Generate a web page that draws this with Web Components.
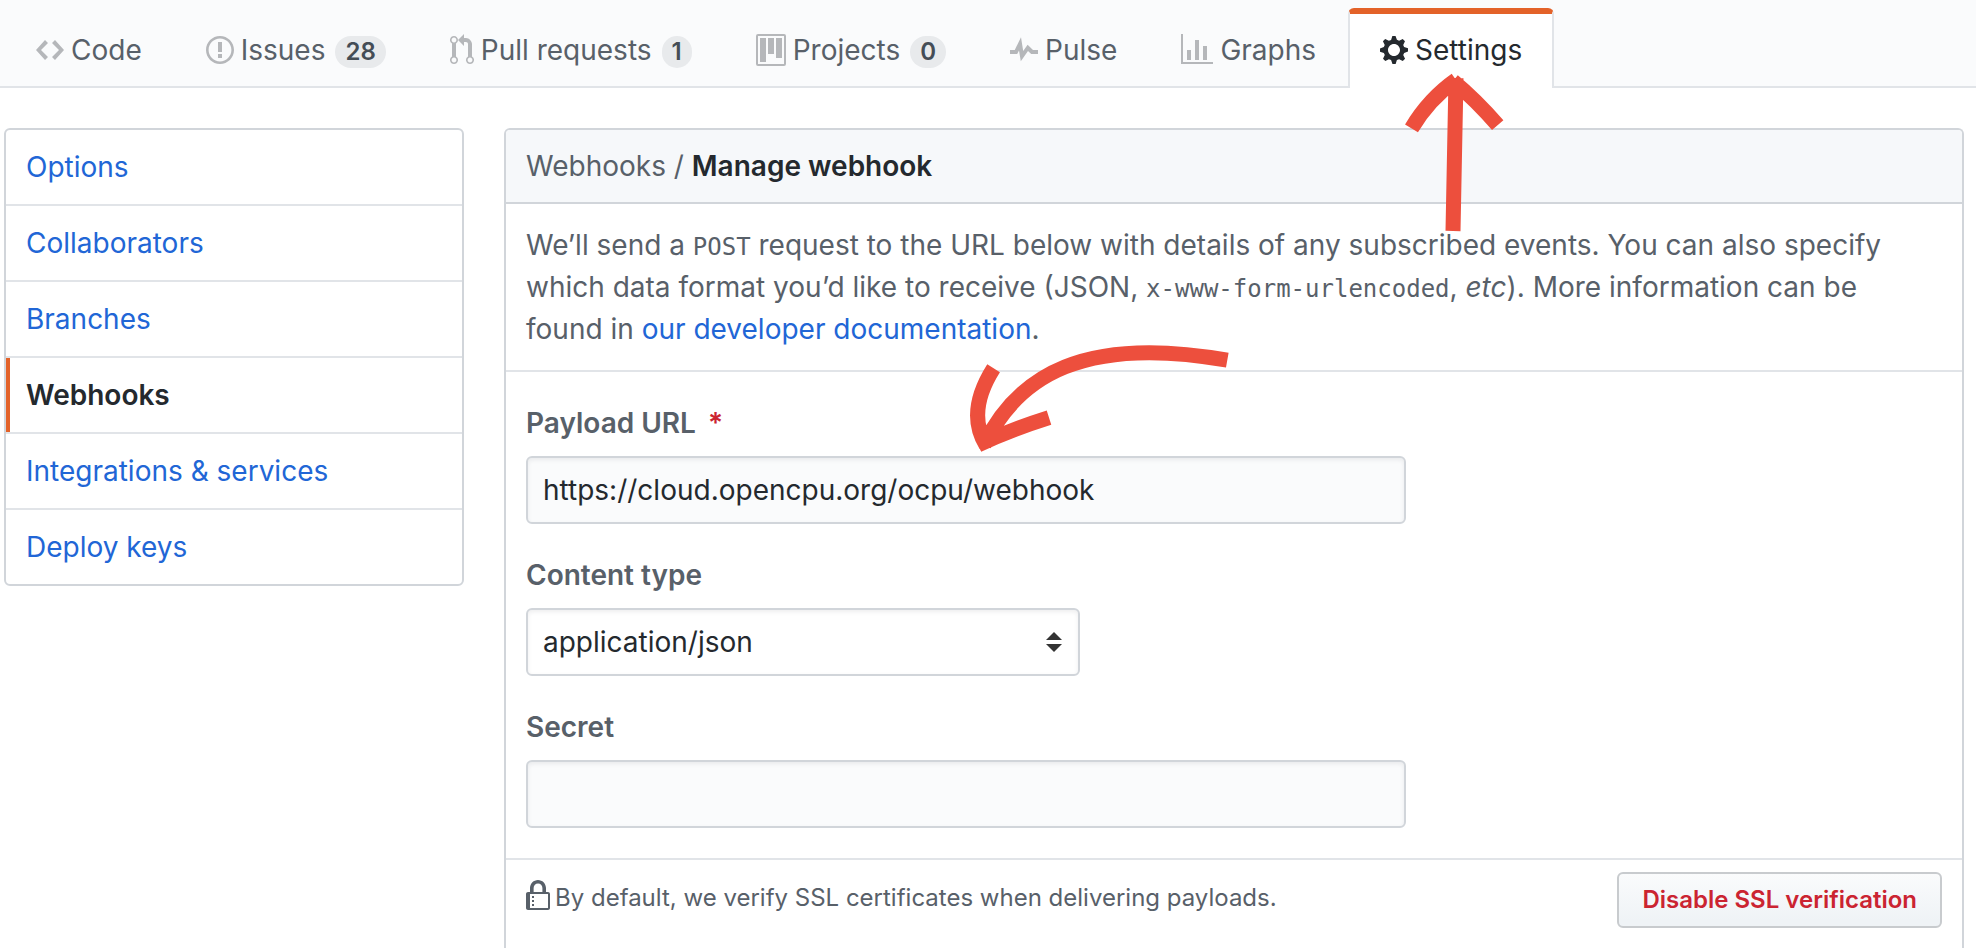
<!DOCTYPE html>
<html lang="en">
<head>
<meta charset="utf-8">
<title>Webhooks · Manage webhook</title>
<style>
  body {
    margin: 0;
    background: #fff;
    color: #586069;
    font: 28px/42px Inter, "Liberation Sans", sans-serif;
  }
</style>
</head>
<body>
<settings-page>
  <repo-nav slot="nav">
    <nav-tab icon="code">Code</nav-tab>
    <nav-tab icon="issue" count="28">Issues</nav-tab>
    <nav-tab icon="pull" count="1">Pull requests</nav-tab>
    <nav-tab icon="project" count="0">Projects</nav-tab>
    <nav-tab icon="pulse">Pulse</nav-tab>
    <nav-tab icon="graph">Graphs</nav-tab>
    <nav-tab icon="gear" selected>Settings</nav-tab>
  </repo-nav>

  <side-menu slot="menu">
    <side-item>Options</side-item>
    <side-item>Collaborators</side-item>
    <side-item>Branches</side-item>
    <side-item selected>Webhooks</side-item>
    <side-item>Integrations &amp; services</side-item>
    <side-item>Deploy keys</side-item>
  </side-menu>

  <webhook-panel slot="main">
    <text-field label="Payload URL" value="https://cloud.opencpu.org/ocpu/webhook" required></text-field>
    <select-field label="Content type" options="application/json,application/x-www-form-urlencoded"></select-field>
    <text-field label="Secret"></text-field>
    <ssl-row slot="footer">By default, we verify SSL certificates when delivering payloads.</ssl-row>
  </webhook-panel>

  <pointer-arrows slot="overlay"></pointer-arrows>
</settings-page>

<script>
const ICONS = {
  code: [14, 'M9.5 3L8 4.5 11.5 8 8 11.5 9.5 13 14 8 9.5 3zm-5 0L0 8l4.5 5L6 11.5 2.5 8 6 4.5 4.5 3z'],
  issue: [14, 'M7 2.3c3.14 0 5.7 2.56 5.7 5.7s-2.56 5.7-5.7 5.7A5.71 5.71 0 0 1 1.3 8c0-3.14 2.56-5.7 5.7-5.7zM7 1C3.14 1 0 4.14 0 8s3.14 7 7 7 7-3.14 7-7-3.14-7-7-7zm1 3H6v5h2V4zm0 6H6v2h2v-2z'],
  pull: [12, 'M11 11.28V5c-.03-.78-.34-1.47-.94-2.06C9.46 2.35 8.78 2.03 8 2H7V0L4 3l3 3V4h1c.27.02.48.11.69.31.21.2.3.42.31.69v6.28A1.993 1.993 0 0 0 10 15a1.993 1.993 0 0 0 1-3.72zm-1 2.92c-.66 0-1.2-.55-1.2-1.2 0-.65.55-1.2 1.2-1.2.65 0 1.2.55 1.2 1.2 0 .65-.55 1.2-1.2 1.2zM4 3c0-1.11-.89-2-2-2a1.993 1.993 0 0 0-1 3.72v6.56A1.993 1.993 0 0 0 2 15a1.993 1.993 0 0 0 1-3.72V4.72c.59-.34 1-.98 1-1.72zm-.8 10c0 .66-.55 1.2-1.2 1.2-.65 0-1.2-.55-1.2-1.2 0-.65.55-1.2 1.2-1.2.65 0 1.2.55 1.2 1.2zM2 4.2C1.34 4.2.8 3.65.8 3c0-.65.55-1.2 1.2-1.2.65 0 1.2.55 1.2 1.2 0 .65-.55 1.2-1.2 1.2z'],
  project: [15, 'M10 12h3V2h-3v10zm-4-2h3V2H6v8zm-4 4h3V2H2v12zm-1 1h13V1H1v14zM14 0H1a1 1 0 0 0-1 1v14a1 1 0 0 0 1 1h13a1 1 0 0 0 1-1V1a1 1 0 0 0-1-1z'],
  pulse: [14, 'M11.5 8L8.8 5.4 6.6 8.5 5.5 1.6 2.38 8H0v2h3.6l.9-1.8.9 5.4L9 8.5l1.6 1.5H14V8h-2.5z'],
  graph: [16, 'M16 14v1H0V0h1v14h15zM5 13H3V8h2v5zm4 0H7V3h2v10zm4 0h-2V6h2v7z'],
  gear: [14, 'M14 8.77v-1.6l-1.94-.64-.45-1.09.88-1.84-1.13-1.13-1.81.91-1.09-.45-.69-1.92h-1.6l-.63 1.94-1.11.45-1.84-.88-1.13 1.13.91 1.81-.45 1.09L0 7.23v1.59l1.94.64.45 1.09-.88 1.84 1.13 1.13 1.81-.91 1.09.45.69 1.92h1.59l.63-1.94 1.11-.45 1.84.88 1.13-1.13-.92-1.81.47-1.09L14 8.75v.02zM7 11c-1.66 0-3-1.34-3-3s1.34-3 3-3 3 1.34 3 3-1.34 3-3 3z'],
  lock: [12, 'M4 13H3v-1h1v1zm8-6v7c0 .55-.45 1-1 1H1c-.55 0-1-.45-1-1V7c0-.55.45-1 1-1h1V4c0-2.2 1.8-4 4-4s4 1.8 4 4v2h1c.55 0 1 .45 1 1zM3.8 6h4.41V4c0-1.22-.98-2.2-2.2-2.2-1.22 0-2.2.98-2.2 2.2v2H3.8zM11 7H2v7h9V7zM4 8H3v1h1V8zm0 2H3v1h1v-1z']
};

const icon = name => {
  const [w, d] = ICONS[name];
  return `<svg class="icon" width="${w * 2}" height="32" viewBox="0 0 ${w} 16" aria-hidden="true"><path fill="currentColor" fill-rule="evenodd" d="${d}"/></svg>`;
};

/* Registers an element whose open shadow root holds the given markup. */
const define = (tag, render) => customElements.define(tag, class extends HTMLElement {
  connectedCallback() {
    if (!this.shadowRoot) this.attachShadow({ mode: 'open' }).innerHTML = render(this);
  }
});

define('settings-page', () => `
  <style>
    :host { display: flex; flex-direction: column; min-height: 100vh; position: relative; }
    .columns {
      flex: 1;
      display: grid;
      grid-template-columns: 460px minmax(0, 1fr);
      gap: 40px;
      padding: 40px 12px 0 4px;
    }
  </style>
  <slot name="nav"></slot>
  <div class="columns"><slot name="menu"></slot><slot name="main"></slot></div>
  <slot name="overlay"></slot>`);

define('repo-nav', () => `
  <style>
    :host { display: block; background: #fafbfc; border-bottom: 2px solid #e1e4e8; }
    nav { display: flex; padding: 8px 4px 0; margin-bottom: -2px; }
  </style>
  <nav aria-label="Repository"><slot></slot></nav>`);

define('nav-tab', el => `
  <style>
    :host { display: block; flex: none; }
    a {
      display: flex;
      align-items: center;
      padding: 20px 30px 22px;
      border: 2px solid transparent;
      border-width: 6px 2px 0;
      border-radius: 6px 6px 0 0;
      color: #586069;
      line-height: 32px;
      text-decoration: none;
      white-space: nowrap;
    }
    :host([selected]) a {
      background: #fff;
      border-color: #e36229 #e1e4e8 transparent;
      color: #24292e;
    }
    .icon { flex: none; margin-right: 7px; color: #b5b7ba; }
    :host([selected]) .icon { color: inherit; }
    .count {
      margin: 2px 0 -2px 10px;
      padding: 0 10px;
      border-radius: 20px;
      background: #e8eaec;
      color: #444d56;
      font-size: 24px;
      font-weight: 600;
    }
  </style>
  <a href="#" ${el.hasAttribute('selected') ? 'aria-current="page"' : ''}>${icon(el.getAttribute('icon'))}<slot></slot>${
    el.hasAttribute('count') ? `<span class="count">${el.getAttribute('count')}</span>` : ''}</a>`);

define('side-menu', () => `
  <style>
    :host { display: block; align-self: start; border: 2px solid #d1d5da; border-radius: 6px; overflow: hidden; }
  </style>
  <nav aria-label="Settings"><slot></slot></nav>`);

define('side-item', el => `
  <style>
    :host { display: block; border-bottom: 2px solid #e1e4e8; }
    :host(:last-child) { border-bottom: 0; }
    a { display: block; padding: 16px 20px; color: #2166d6; text-decoration: none; }
    :host([selected]) a {
      padding-left: 16px;
      border-left: 4px solid #e36229;
      color: #24292e;
      font-weight: 600;
    }
  </style>
  <a href="#" ${el.hasAttribute('selected') ? 'aria-current="page"' : ''}><slot></slot></a>`);

define('webhook-panel', () => `
  <style>
    :host { display: block; border: 2px solid #d1d5da; border-bottom: 0; border-radius: 6px 6px 0 0; }
    h1 {
      margin: 0;
      padding: 15px 20px;
      border-bottom: 2px solid #d1d5da;
      border-radius: 4px 4px 0 0;
      background: #f6f8fa;
      color: #24292e;
      font-size: inherit;
      font-weight: 600;
    }
    h1 a { color: #586069; font-weight: 400; text-decoration: none; }
    p { margin: 0; padding: 20px 40px 20px 20px; border-bottom: 2px solid #e1e4e8; }
    p a { color: #2166d6; text-decoration: none; }
    code { font: 24px "DejaVu Sans Mono", "Liberation Mono", monospace; line-height: 1; }
    form { display: grid; gap: 30px; padding: 30px 20px; border-bottom: 2px solid #e1e4e8; }
  </style>
  <h1><a href="#">Webhooks / </a>Manage webhook</h1>
  <p>We’ll send a <code>POST</code> request to the URL below with details of any subscribed events. You can also specify which data format you’d like to receive (JSON, <code>x-www-form-urlencoded</code>, <em>etc</em>). More information can be found in <a href="#">our developer documentation</a>.</p>
  <form><slot></slot></form>
  <slot name="footer"></slot>`);

const FIELD_CSS = `
    :host { display: block; }
    label { display: block; margin-bottom: 12px; font-weight: 600; }
    .star { margin-left: 12px; color: #cb2431; }
    input, select {
      display: block;
      box-sizing: border-box;
      width: 100%;
      height: 68px;
      padding: 0 15px;
      border: 2px solid #d1d5da;
      border-radius: 6px;
      background: #fafbfc;
      box-shadow: inset 0 2px 4px rgba(27, 31, 35, .075);
      color: #24292e;
      font: inherit;
    }`;

define('text-field', el => `
  <style>${FIELD_CSS}
    :host { max-width: 880px; }
  </style>
  <label for="field">${el.getAttribute('label')}${el.hasAttribute('required') ? '<span class="star">*</span>' : ''}</label>
  <input id="field" type="text" value="${el.getAttribute('value') || ''}">`);

define('select-field', el => `
  <style>${FIELD_CSS}
    :host { max-width: 554px; }
    .box { display: grid; align-items: center; }
    .box > * { grid-area: 1 / 1; }
    select { appearance: none; background: #fff; }
    svg { justify-self: end; margin-right: 18px; pointer-events: none; z-index: 1; }
  </style>
  <label for="field">${el.getAttribute('label')}</label>
  <div class="box">
    <select id="field">${el.getAttribute('options').split(',').map(o => `<option>${o}</option>`).join('')}</select>
    <svg width="16" height="20" viewBox="0 0 16 20" fill="#333" aria-hidden="true"><path d="M8 0l8 8H0zM0 12h16l-8 8z"/></svg>
  </div>`);

define('ssl-row', () => `
  <style>
    :host { display: flex; justify-content: space-between; align-items: start; padding: 12px 20px; font-size: 24px; }
    .note { display: flex; gap: 5px; padding-top: 8px; line-height: 36px; }
    .icon { flex: none; }
    button {
      padding: 0 23px;
      border: 2px solid #c8cbce;
      border-radius: 6px;
      background: linear-gradient(#fafbfc, #eff3f6 90%);
      color: #cb2431;
      font: 600 24px/52px Inter, "Liberation Sans", sans-serif;
      white-space: nowrap;
    }
  </style>
  <div class="note">${icon('lock')}<span><slot></slot></span></div>
  <button type="button">Disable SSL verification</button>`);

/* Hand-drawn arrows that lie over the page. */
define('pointer-arrows', () => `
  <style>
    :host { position: absolute; top: 0; left: 0; pointer-events: none; }
    svg { position: absolute; fill: none; stroke: #ed4f3d; stroke-width: 15; }
    .up { left: 1400px; top: 70px; }
    .down { left: 960px; top: 340px; }
  </style>
  <svg class="up" width="110" height="165" viewBox="1400 70 110 165" aria-hidden="true">
    <path d="M1453 231L1456 78M1411.5 128.3Q1429 99 1456 80M1497.7 125.2Q1476 100 1453 81"/>
  </svg>
  <svg class="down" width="280" height="115" viewBox="960 340 280 115" aria-hidden="true">
    <path d="M1227.3 360.2C1085 335 1018 375 984 445M993.6 368.3Q966 412 986 445M1049 417.7Q1010 430 978 445"/>
  </svg>`);
</script>
</body>
</html>
